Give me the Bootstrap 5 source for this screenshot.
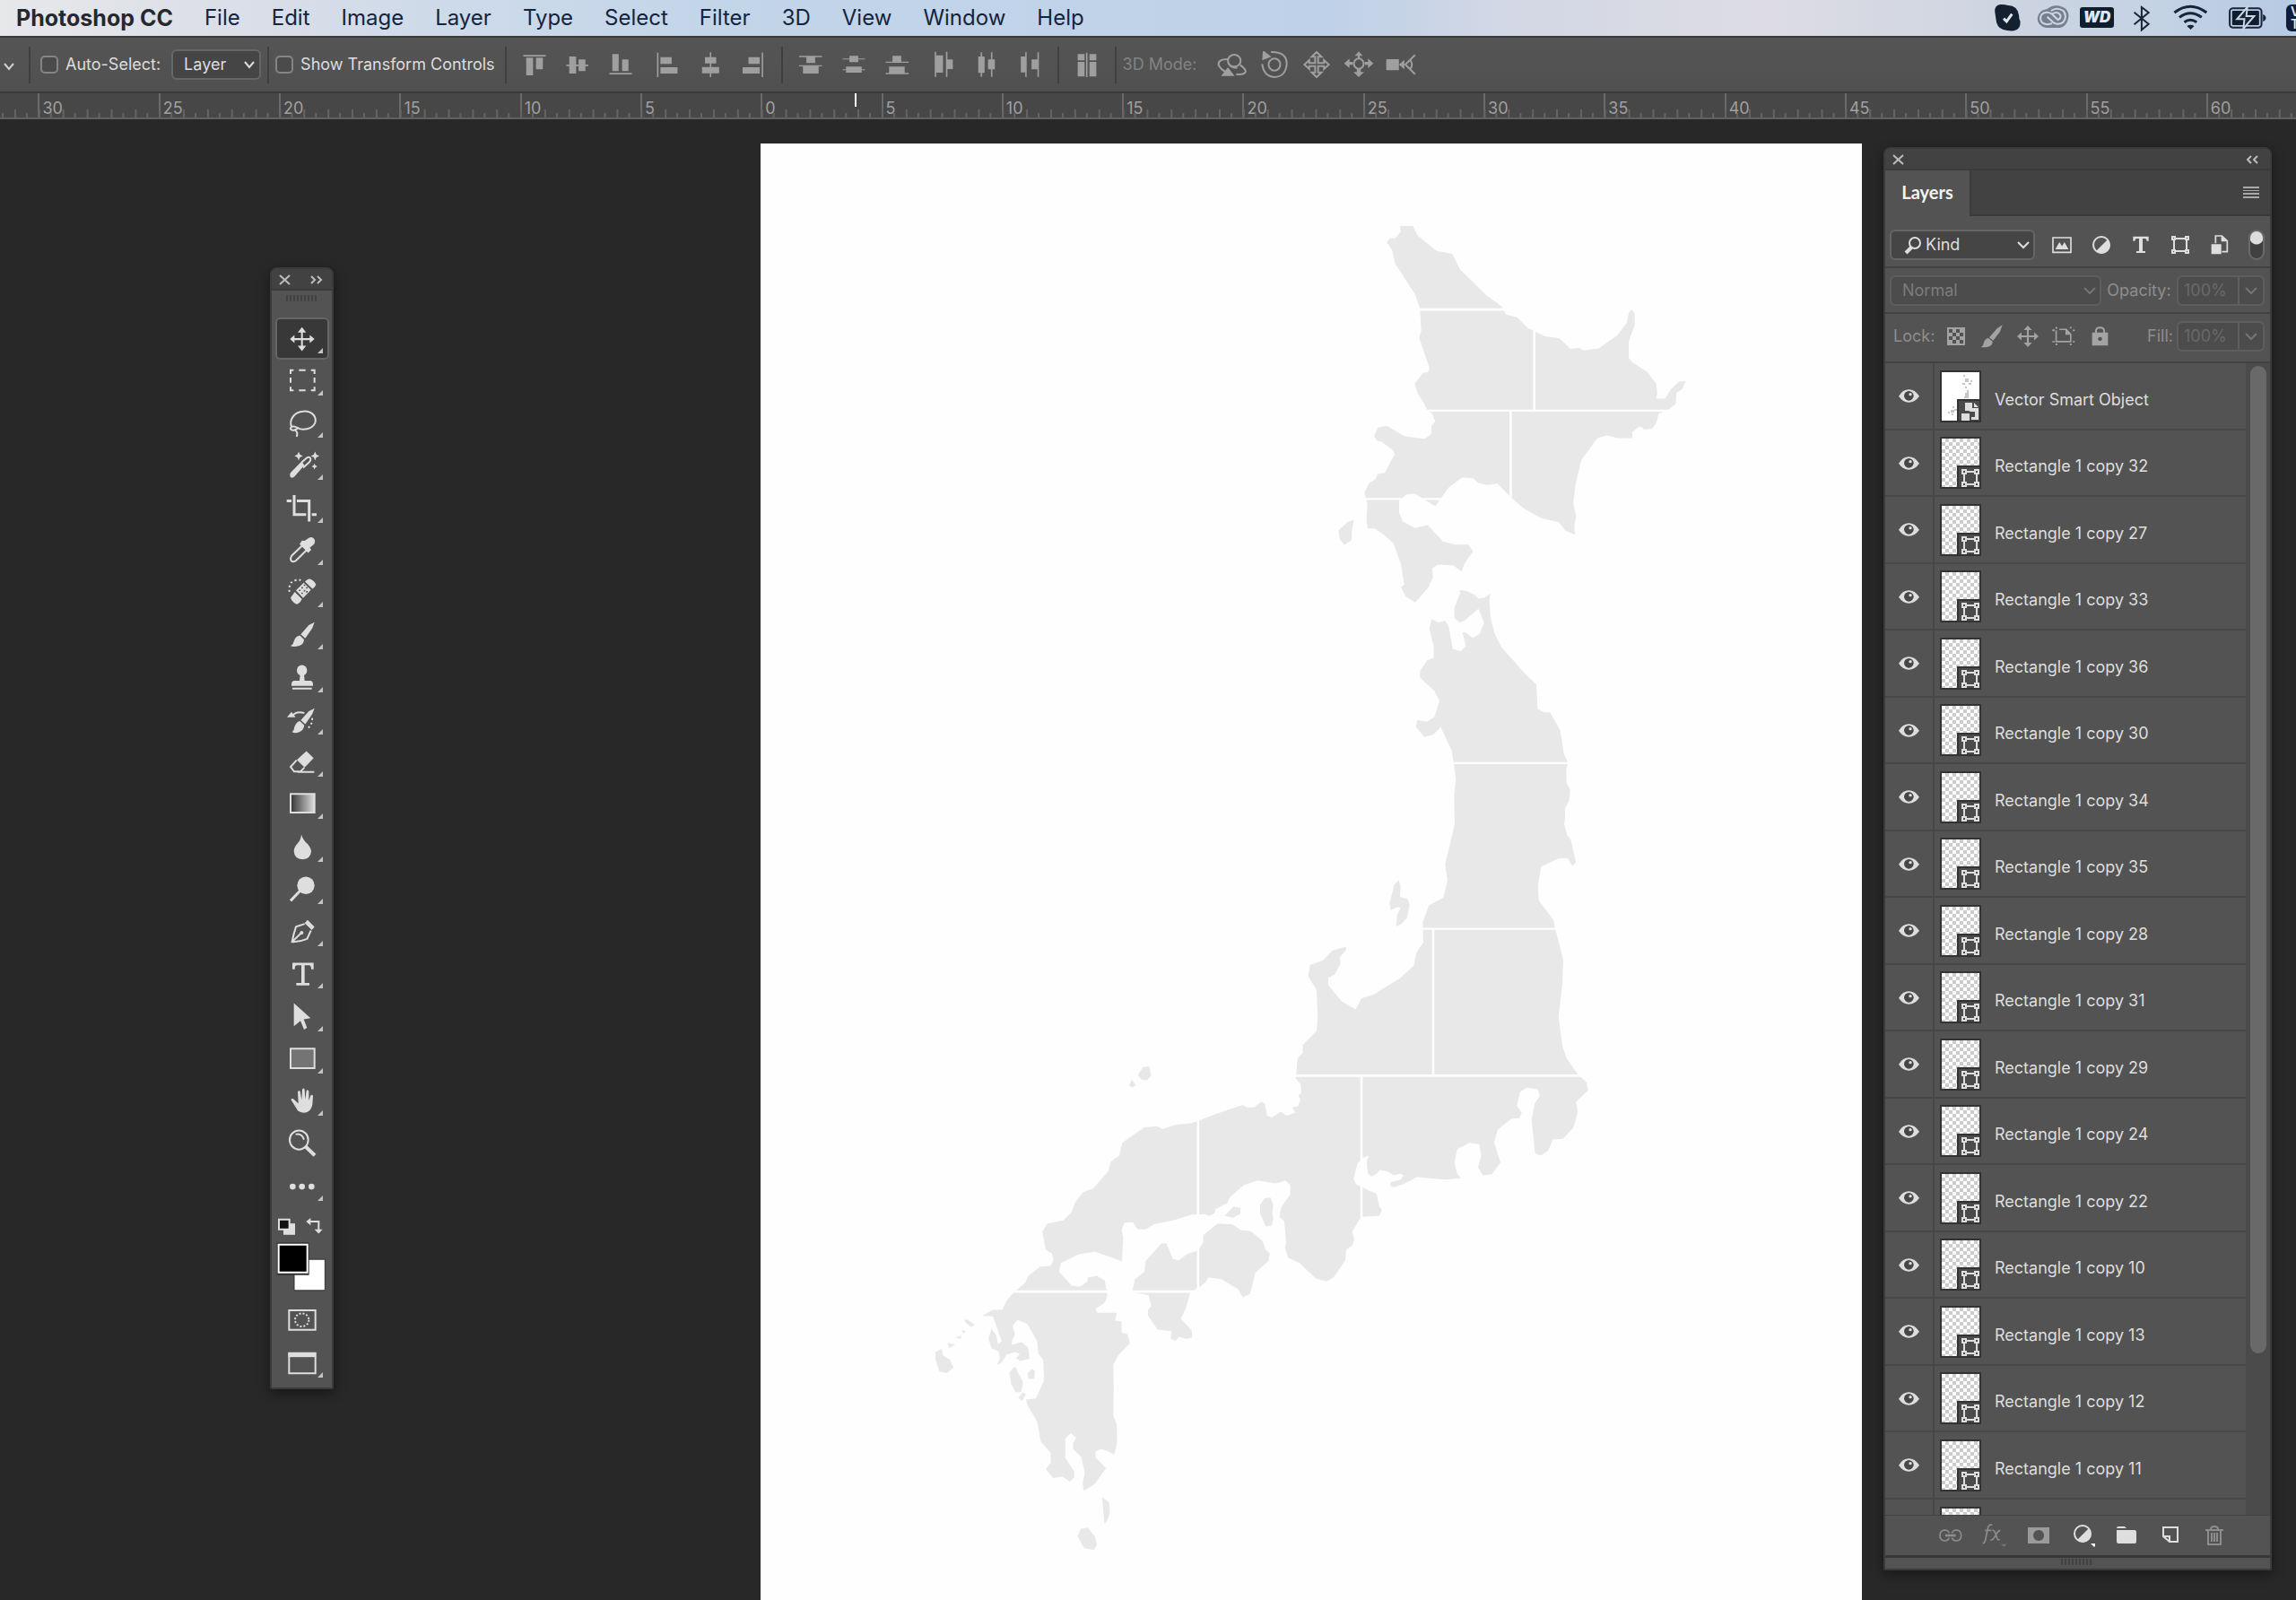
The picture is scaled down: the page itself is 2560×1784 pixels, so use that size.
<!DOCTYPE html>
<html lang="en">
<head>
<meta charset="utf-8">
<meta name="viewport" content="width=device-width, initial-scale=1">
<title>Photoshop CC</title>
<link href="https://cdn.jsdelivr.net/npm/bootstrap@5.3.0/dist/css/bootstrap.min.css" rel="stylesheet">
<style>
  :root { --panel:#535353; --panel-dark:#424242; --edge:#3b3b3b; --field:#454545; --ink:#dedede; --dim:#8e8e8e; --off:#6c6c6c; }
  body { font-family: Inter, "Liberation Sans", sans-serif; font-size:18px; line-height:24px; background:#282828; color:var(--ink); }
  svg { display:block; flex:none; }
  .line path, .line rect, .line circle, .line ellipse { vector-effect:non-scaling-stroke; }
  .bare { background:none; border:0; padding:0; color:inherit; display:flex; align-items:center; justify-content:center; }

  /* system menu bar */
  .menubar { height:40px; color:#14243c; background:linear-gradient(90deg,#e7e8ea 0,#d9dde8 12%,#cddaea 20%,#c2d5e9 32%,#bfd1e8 58%,#d3d8e5 66%,#dddce4 77%,#ccd4e1 88%,#c4d2e4 94%,#b5cae3 100%); }
  .menubar a { color:inherit; text-decoration:none; font-size:24px; line-height:40px; white-space:nowrap; }
  .menu-list { gap:35px; padding-left:18px; }
  .menu-list a:first-child { color:#25292f; font-size:25px; }
  .wd-box { width:38px; height:23px; margin:8px 12px 9px 6px; border-radius:3px; background:#0f1d2f; color:#dfe6f0; font:italic 900 17px/23px Inter, sans-serif; text-align:center; }
  .vt-box { width:11px; height:30px; margin:5px 0 5px 10px; border-radius:6px 0 0 6px; background:#0f1d3a; color:#dfe6f0; font:600 14px/14px Inter, sans-serif; overflow:hidden; padding:1px 0 0 5px; }

  /* tool options */
  .options { height:64px; border-top:2px solid #3a3a3a; border-bottom:2px solid #3a3a3a; background:linear-gradient(#555,#505050); white-space:nowrap; }
  .options label { padding-right:4px; }
  .sep { flex:none; width:2px; height:41px; background:#3f3f3f; margin:0 7px; }
  .tick { appearance:none; flex:none; width:20px; height:20px; border:2px solid #858585; border-radius:5px; background:#4b4b4b; margin:0; }
  .opt { width:48px; height:60px; color:#9f9f9f; flex:none; }
  .opt.mode { width:47px; }
  .drop { position:relative; }
  .drop select, .field { appearance:none; width:100%; height:34px; border:2px solid #666; border-radius:6px; background:var(--field); color:var(--ink); font-size:18px; line-height:24px; padding:0 12px; }
  .drop svg { position:absolute; right:6px; top:11px; pointer-events:none; }
  .faded select, .field { background:#4c4c4c; border-color:#5e5e5e; color:#7c7c7c; opacity:1; }

  /* ruler */
  .ruler { position:relative; height:29px; background:#474747; border-bottom:2px solid #606060; overflow:hidden; color:#a0a0a0; padding-left:1.66%; }
  .ruler svg { position:absolute; left:0; top:0; }
  .ruler span { flex:0 0 5.335%; padding-left:3px; border-left:2px solid #6a6a6a; line-height:33px; }
  .pointer { position:absolute; left:37.23%; top:0; width:2px; height:15px; background:#fff; }

  /* workspace */
  .work { position:relative; overflow:hidden; }
  .page { width:47.95%; margin:27px 0 0 33.14%; background:#fefefe; }
  .page svg { width:100%; height:auto; }
  .window { position:absolute; border:2px solid var(--edge); background:var(--panel); border-radius:8px 8px 2px 2px; box-shadow:0 4px 14px rgba(0,0,0,.45); overflow:hidden; }
  .titlebar { height:24px; background:var(--panel-dark); border-bottom:2px solid var(--edge); color:#bdbdbd; padding-top:2px; }
  .grip { width:36px; height:7px; background:repeating-linear-gradient(90deg,#424242 0 2px,transparent 2px 4px); }

  /* tool palette */
  .palette { left:301px; top:165px; width:71px; }
  .grip-row { padding:5px 0 18px; }
  .tool { position:relative; width:60px; height:47px; border:0; padding:0; background:none; color:var(--ink); border-radius:5px; display:block; }
  .tool.on { background:#383838; box-shadow:inset 0 0 0 2px #666; }
  .more::after { content:""; position:absolute; right:7px; bottom:7px; border-left:6px solid transparent; border-bottom:6px solid #c4c4c4; }

  /* layers panel */
  .layers { right:27px; top:31px; width:433px; }
  .tabs { height:51px; background:var(--panel-dark); border-bottom:2px solid var(--edge); }
  .tabs .tab { height:51px; width:96px; background:var(--panel); border-right:2px solid var(--edge); font:700 20px/48px Lato, sans-serif; color:#f2f2f2; padding-bottom:3px; }
  .prow { border-bottom:2px solid #424242; height:51px; padding:0 6px 0 5px; color:var(--dim); }
  .prow.kind { height:58px; padding-top:7px; }
  .prow.lock { height:55px; padding-bottom:4px; }
  .kind .bare { width:44px; height:34px; color:var(--ink); }
  .lock .bare { width:40px; height:34px; color:#a3a3a3; }
  .switch { appearance:none; width:18px; height:34px; border-radius:9px; border:2px solid #6a6a6a; background:radial-gradient(circle at 7px 7px,#dedede 7px,#404040 8px); margin:0; flex:none; }
  .num { width:98px; flex:none; }
  .num .field { width:70px; border-radius:6px 0 0 6px; padding:0 6px; color:#696969; }
  .num .bare { width:28px; height:34px; border:2px solid #5e5e5e; border-left:0; border-radius:0 6px 6px 0; background:#4c4c4c; color:#757575; }
  .list { height:1284px; overflow:hidden; }
  .layer { height:74px; border-bottom:2px solid #474747; }
  .layer:nth-child(odd) { height:75px; }
  .eye { width:55px; height:100%; border-right:2px solid #474747; flex:none; color:var(--ink); }
  .eye.bare { border-right:2px solid #474747; }
  .thumb { margin:0 15px 0 6px; }
  .lname { padding-top:8px; white-space:nowrap; }
  .track { width:27px; background:#4b4b4b; padding:3px 4px 0 5px; flex:none; }
  .knob { height:1101px; border-radius:9px; background:#696969; }
  .foot { height:45px; padding-left:48px; border-top:1px solid #424242; }
  .foot .bare { width:49px; height:43px; }
  .endgrip { height:15px; border-top:3px solid #383838; }
  .endgrip .grip { margin:1px 0 0 196px; }
</style>
<script src="https://cdn.jsdelivr.net/npm/bootstrap@5.3.0/dist/js/bootstrap.bundle.min.js"></script>
</head>
<body class="vh-100 d-flex flex-column overflow-hidden">

<header class="menubar d-flex justify-content-between flex-shrink-0">
  <nav class="menu-list d-flex">
    <a href="#" class="fw-bold">Photoshop CC</a><a href="#">File</a><a href="#">Edit</a><a href="#">Image</a><a href="#">Layer</a><a href="#">Type</a><a href="#">Select</a><a href="#">Filter</a><a href="#">3D</a><a href="#">View</a><a href="#">Window</a><a href="#">Help</a>
  </nav>
  <div class="d-flex">
    <svg class="line" width="47" height="40" viewBox="940 0 86 120" preserveAspectRatio="none"><path fill="#141f2f" d="M966 15Q955 17 955 38Q956 48 957 60Q958 92 972 99Q982 104 994 103Q1008 98 1007 72Q1004 62 1004 50Q1001 18 982 18Q974 14 966 15Z"/><path d="M973 62L979 72L990 47" fill="none" stroke="#dde5ef" stroke-width="3"/></svg>
    <svg class="line" width="50" height="40" viewBox="1026 0 92 120" preserveAspectRatio="none" fill="none" stroke="#76818f"><path fill="#76818f" stroke="none" d="M1062 30Q1070 18 1083 19Q1106 24 1106 55Q1104 88 1088 93H1060Q1042 88 1042 61Q1044 34 1062 30Z"/><path stroke="#ced6e2" stroke-width="2" d="M1071 46Q1060 36 1051 48Q1045 63 1052 76Q1062 86 1072 78M1070 36Q1082 22 1095 36Q1104 54 1095 74Q1086 85 1076 77L1062 56M1072 47Q1083 36 1089 50Q1091 62 1084 66L1071 46"/></svg>
    <span class="wd-box">WD</span>
    <svg class="line" width="40" height="40" viewBox="1221 0 72 120" preserveAspectRatio="none"><path fill="none" stroke="#17243a" stroke-width="2" d="M1240 41L1269 80L1255 100V24L1269 42L1240 82"/></svg>
    <svg class="line" width="64" height="40" viewBox="1293 0 116 120" preserveAspectRatio="none"><path fill="none" stroke="#17243a" stroke-width="3" d="M1321 42Q1353 1 1386 42M1331 58Q1353 30 1376 58M1341 74Q1353 60 1366 74"/><path fill="#17243a" d="M1346 87Q1354 80 1361 87L1354 99Z"/></svg>
    <svg class="line" width="66" height="40" viewBox="1409 0 121 120" preserveAspectRatio="none"><rect x="1433" y="28" width="65" height="64" rx="7" ry="10" fill="none" stroke="#17243a" stroke-width="2"/><rect x="1438" y="36" width="55" height="48" rx="2" fill="#0f1d2f"/><path fill="#17243a" d="M1501 48Q1507 52 1507 60T1501 72Z"/><path fill="#17243a" stroke="#cad7e7" stroke-width="2" d="M1469 24L1448 64H1463L1461 96L1483 54H1467Z"/></svg>
    <span class="vt-box">V<br>T</span>
  </div>
</header>

<section class="options d-flex align-items-center flex-shrink-0" aria-label="Tool options">
  <svg class="line" width="25" height="60" viewBox="0 0 25 60"><path d="M5 29l5 6 5-6" fill="none" stroke="#d0d0d0" stroke-width="2"/></svg>
  <i class="sep"></i>
  <input class="tick ms-1 me-2" type="checkbox" id="auto"><label for="auto">Auto-Select:</label>
  <div class="drop ms-2" style="width:100px"><select aria-label="Auto-select target"><option>Layer</option></select><svg class="line" width="14" height="12" viewBox="0 0 14 12"><path d="M2 3l5 6 5-6" fill="none" stroke="#dedede" stroke-width="2"/></svg></div>
  <i class="sep"></i>
  <input class="tick me-2" type="checkbox" id="xform"><label for="xform">Show Transform Controls</label>
  <i class="sep"></i>
  <button class="bare opt" aria-label="Align top"><svg width="36" height="30" viewBox="1053 170 66 90" preserveAspectRatio="none" fill="currentColor"><path d="M1063 183h46v5h-46zM1069 192h14v59h-14zM1089 192h14v39h-14z"/></svg></button>
  <button class="bare opt" aria-label="Align middle"><svg width="36" height="30" viewBox="1140 170 66 90" preserveAspectRatio="none" fill="currentColor"><path d="M1156 188h14v57h-14zM1175 198h14v39h-14zM1150 215h45v5h-45z"/></svg></button>
  <button class="bare opt" aria-label="Align bottom"><svg width="36" height="30" viewBox="1226 170 66 90" preserveAspectRatio="none" fill="currentColor"><path d="M1242 180h13v57h-13zM1262 198h13v39h-13zM1236 243h46v5h-46z"/></svg></button>
  <button class="bare opt ms-1" aria-label="Align left"><svg width="36" height="30" viewBox="1324 170 66 90" preserveAspectRatio="none" fill="currentColor"><path d="M1336 175h3v82h-3zM1343 190h23v23h-23zM1343 224h35v21h-35z"/></svg></button>
  <button class="bare opt" aria-label="Align centre"><svg width="36" height="30" viewBox="1410 170 66 90" preserveAspectRatio="none" fill="currentColor"><path d="M1442 174h3v83h-3zM1432 190h23v21h-23zM1426 223h35v21h-35z"/></svg></button>
  <button class="bare opt" aria-label="Align right"><svg width="36" height="30" viewBox="1497 170 66 90" preserveAspectRatio="none" fill="currentColor"><path d="M1547 175h3v82h-3zM1520 190h23v23h-23zM1508 224h35v21h-35z"/></svg></button>
  <i class="sep"></i>
  <button class="bare opt" aria-label="Distribute top"><svg width="36" height="30" viewBox="82 170 66 90" preserveAspectRatio="none" fill="currentColor"><path d="M91 186h47v4h-47zM91 217h47v4h-47zM106 188h18v22h-18zM99 219h32v26h-32z"/></svg></button>
  <button class="bare opt" aria-label="Distribute middle"><svg width="36" height="30" viewBox="168 170 66 90" preserveAspectRatio="none" fill="currentColor"><path d="M178 195h46v3h-46zM178 231h46v3h-46zM192 186h18v21h-18zM185 222h32v20h-32z"/></svg></button>
  <button class="bare opt" aria-label="Distribute bottom"><svg width="36" height="30" viewBox="254 170 66 90" preserveAspectRatio="none" fill="currentColor"><path d="M264 205h47v4h-47zM264 243h47v4h-47zM278 186h18v21h-18zM271 222h32v22h-32z"/></svg></button>
  <button class="bare opt ms-1" aria-label="Distribute left"><svg width="36" height="30" viewBox="353 170 66 90" preserveAspectRatio="none" fill="currentColor"><path d="M368 172h3v84h-3zM391 172h3v84h-3zM371 184h14v58h-14zM393 198h12v32h-12z"/></svg></button>
  <button class="bare opt" aria-label="Distribute centre"><svg width="36" height="30" viewBox="440 170 66 90" preserveAspectRatio="none" fill="currentColor"><path d="M461 174h3v82h-3zM482 174h3v82h-3zM456 188h13v55h-13zM476 198h14v33h-14z"/></svg></button>
  <button class="bare opt" aria-label="Distribute right"><svg width="36" height="30" viewBox="526 170 66 90" preserveAspectRatio="none" fill="currentColor"><path d="M550 174h3v82h-3zM575 174h3v82h-3zM541 188h10v53h-10zM563 198h12v33h-12z"/></svg></button>
  <i class="sep"></i>
  <button class="bare opt" aria-label="Auto-align"><svg width="36" height="30" viewBox="642 170 66 90" preserveAspectRatio="none" fill="currentColor"><path d="M656 180h14v21h-14zM680 180h14v21h-14zM656 206h14v49h-14zM680 206h14v49h-14zM673 175h3v82h-3z"/></svg></button>
  <i class="sep"></i>
  <span class="me-3" style="color:#838383">3D Mode:</span>
  <button class="bare opt mode" aria-label="Orbit"><svg class="line" width="36" height="30" viewBox="941 170 66 90" preserveAspectRatio="none" fill="none" stroke="currentColor" stroke-width="2"><ellipse cx="978" cy="202" rx="13" ry="20"/><path d="M965 197Q944 197 946 216Q950 232 962 240M966 208Q968 226 984 226M990 216Q1003 232 1001 240Q997 250 982 247"/><path d="M955 250L965 229L975 250Z" fill="currentColor"/></svg></button>
  <button class="bare opt mode" aria-label="Roll"><svg class="line" width="36" height="30" viewBox="1027 170 66 90" preserveAspectRatio="none" fill="none" stroke="currentColor" stroke-width="2"><ellipse cx="1060" cy="215" rx="12" ry="20"/><path d="M1053 173Q1086 172 1085 215Q1082 256 1060 257Q1038 254 1035 213"/><path d="M1038 173L1050 188L1037 196Z" fill="currentColor"/></svg></button>
  <button class="bare opt mode" aria-label="Pan"><svg class="line" width="36" height="30" viewBox="1113 170 66 90" preserveAspectRatio="none" fill="none" stroke="currentColor" stroke-width="2"><path d="M1146 173L1156 189H1149V210H1161V200L1171 215L1161 230V220H1149V241H1156L1146 257L1136 241H1143V220H1131V230L1121 215L1131 200V210H1143V189H1136Z"/></svg></button>
  <button class="bare opt mode" aria-label="Slide"><svg class="line" width="36" height="30" viewBox="1199 170 66 90" preserveAspectRatio="none" fill="currentColor"><path d="M1232 171L1240 186H1234V194H1230V186H1224ZM1232 257L1221 240H1228V230H1236V240H1243ZM1202 211L1213 195V206H1220V216H1213V227ZM1262 211L1251 195V206H1244V216H1251V227Z"/><ellipse cx="1232" cy="212" rx="10" ry="17" fill="none" stroke="currentColor" stroke-width="2"/></svg></button>
  <button class="bare opt mode" aria-label="Zoom camera"><svg class="line" width="36" height="30" viewBox="1286 170 66 90" preserveAspectRatio="none" fill="currentColor"><rect x="1289" y="197" width="26" height="37" rx="2"/><path d="M1315 215L1326 199V231Z"/><path d="M1348 183L1328 215L1348 247M1338 200Q1345 215 1338 230" fill="none" stroke="currentColor" stroke-width="2"/></svg></button>
</section>

<div class="ruler d-flex flex-shrink-0" aria-label="Ruler">
  <svg width="100%" height="27"><defs><pattern id="ticks" patternUnits="userSpaceOnUse" x="16" y="0" width="26.86" height="27"><path d="M0 18h2v9h-2zM13 22h2v5h-2z" fill="#646464"/></pattern></defs><rect width="100%" height="27" fill="url(#ticks)"/></svg>
  <span>30</span><span>25</span><span>20</span><span>15</span><span>10</span><span>5</span><span>0</span><span>5</span><span>10</span><span>15</span><span>20</span><span>25</span><span>30</span><span>35</span><span>40</span><span>45</span><span>50</span><span>55</span><span>60</span>
  <i class="pointer"></i>
</div>

<main class="work flex-grow-1">
  <div class="page">
    <svg viewBox="849 160 1227 1624" role="img" aria-label="Map of Japan">
      <g fill="#e8e8e8">
        <g transform="translate(1440 230) scale(.33333)">
          <path d="M365,66 408,66 415,80 424,97 487,149 540,159 566,211 655,298 705,334 720,362 757,371 792,407 850,435 897,441 935,477 964,473 979,482 1029,475 1091,432 1123,390 1130,356 1137,348 1143,348 1150,360 1150,396 1130,452 1130,507 1142,522 1191,553 1222,594 1225,624 1222,643 1251,643 1272,610 1298,586 1321,584 1309,611 1290,623 1287,661 1263,680 1230,693 1223,722 1209,743 1182,746 1167,735 1141,755 1143,775 1094,775 1056,766 1024,776 971,849 952,930 944,993 954,1035 948,1070 950,1098 917,1084 897,1057 836,1042 778,1010 735,972 691,927 656,932 626,924 610,909 572,907 528,940 483,1003 440,976 415,961 387,963 362,984 362,1023 374,1053 415,1076 458,1066 509,1121 548,1131 594,1131 609,1154 581,1194 570,1221 543,1200 491,1198 473,1211 475,1241 461,1273 416,1325 384,1305 368,1273 379,1265 368,1195 343,1127 313,1100 280,1077 257,1077 253,1050 256,995 246,958 261,926 283,913 290,895 315,891 334,852 347,832 343,816 303,787 289,784 278,770 291,740 321,734 379,768 447,777 469,762 471,732 483,719 472,693 456,683 447,661 424,625 414,592 443,557 460,554 463,539 429,440 436,415 432,342 416,295 349,192 338,145 321,120 331,107 349,107 368,84Z"/>
          <path d="M211,1048 204,1085 203,1116 180,1132 163,1113 160,1083 191,1055Z"/>
          <path fill="#fefefe" d="M420 341h300v8h-300zM810 400h8v283h-8zM440 680h840v7h-840zM731 683h8v300h-8zM240 975h135v7h-135zM430 975h80v7h-80z"/>
        </g>
        <g transform="translate(1400 630) scale(.33333 .39541)">
          <path d="M685,70 705,72 734,83 746,94 766,92 787,80 784,97 788,150 803,196 824,231 907,309 941,336 945,405 967,415 987,415 1021,466 1033,532 1047,556 1041,577 1042,615 1054,631 1050,665 1037,685 1037,710 1034,730 1044,761 1056,773 1073,837 1062,848 1046,826 1016,826 957,850 946,903 949,945 998,1000 1005,1027 1031,1114 1028,1180 1015,1272 1028,1355 1042,1390 1083,1439 137,1439 143,1389 160,1375 160,1352 206,1313 210,1275 206,1197 178,1159 184,1127 229,1113 259,1086 304,1076 306,1083 283,1106 286,1123 266,1154 245,1163 245,1184 291,1230 337,1252 356,1221 395,1211 487,1163 531,1128 540,1093 563,1063 561,1006 582,959 630,937 644,888 636,843 668,730 666,650 672,604 664,556 658,523 621,456 596,478 566,484 538,455 543,436 575,441 600,428 617,382 600,355 552,317 552,297 576,268 598,261 597,225 583,179 591,152 613,162 635,156 648,172 661,235 688,243 705,229 694,189 705,190 728,205 752,193 766,162 747,123 703,155 685,162 667,149 667,120 686,80Z"/>
          <path d="M481,888 487,909 485,935 511,941 517,959 508,994 488,1012 472,1018 475,988 486,967 478,963 454,973 450,954 466,900Z"/>
          <path fill="#fefefe" d="M655 555h400v6h-400zM555 1022h460v6h-460zM592 1025h8v414h-8z"/>
        </g>
        <g transform="translate(1100 1180) scale(.44643 .33333)">
          <path d="M774,57 1483,57 1500,80 1504,106 1473,145 1478,177 1467,231 1441,268 1416,270 1404,307 1386,324 1371,316 1363,204 1370,152 1383,124 1378,102 1350,97 1334,111 1326,158 1338,180 1332,199 1312,201 1278,237 1269,280 1285,347 1263,387 1241,390 1229,363 1237,324 1232,286 1208,281 1177,302 1170,346 1177,385 1187,399 1149,404 1076,396 1043,419 1018,430 1009,424 1012,413 1036,404 1043,390 1036,385 1018,389 1003,377 984,372 976,385 963,394 954,384 951,344 956,325 942,331 928,351 918,401 925,421 976,452 982,492 989,507 982,526 937,529 915,578 920,604 915,625 900,638 897,676 868,732 851,745 824,735 783,683 754,665 747,630 750,613 745,542 733,529 738,496 760,454 760,422 748,408 723,417 679,407 645,422 610,462 603,482 574,503 571,517 557,526 547,520 514,521 468,541 422,553 399,571 379,570 367,547 347,548 339,570 343,597 340,677 309,662 272,645 232,655 187,684 183,712 214,759 235,763 254,745 254,732 277,726 297,741 302,779 72,779 98,750 106,727 136,695 162,693 169,672 165,651 150,640 141,578 154,551 194,541 214,513 223,481 243,446 268,434 306,376 312,345 333,324 341,281 396,230 428,226 441,236 475,221 514,216 577,184 642,155 652,163 670,163 688,144 697,150 702,190 714,197 736,177 752,191 773,180 765,163 779,160 786,136 780,124 788,114 786,86 774,66Z"/>
          <path d="M393,28 408,26 413,57 402,72 389,71 380,54ZM364,69 375,88 367,96 358,91ZM695,467 711,464 718,489 715,515 718,536 714,558 699,560 685,519 685,489ZM619,495 636,499 636,519 617,532 596,525Z"/>
          <path d="M579,551 616,554 638,574 661,576 691,609 698,637 709,652 706,676 673,716 660,787 641,798 630,771 588,737 556,731 547,751 515,779 510,783 500,833 487,869 514,908 515,932 500,937 483,930 473,943 461,936 464,911 429,906 405,859 405,840 413,828 407,792 366,779 372,738 396,713 399,677 438,618 451,617 467,669 481,675 503,653 530,641 543,614 543,590Z"/>
          <path fill="#fefefe" d="M765 53h730v8h-730zM935 57h6v475h-6zM527 195h6v335h-6zM527 635h6v140h-6zM360 775h160v8h-160z"/>
        </g>
        <g transform="translate(1020 1370) scale(.33333)">
          <path d="M335,210 644,210 647,222 637,247 606,267 614,280 678,280 673,305 694,309 694,346 714,351 722,381 685,420 666,453 668,520 667,625 678,654 679,716 669,755 650,743 624,735 607,744 607,764 642,799 605,852 568,875 564,849 571,816 560,763 532,735 532,715 543,698 524,682 506,701 506,765 536,811 536,829 522,844 496,828 465,832 441,802 457,781 457,748 424,710 412,643 382,594 374,570 408,566 435,505 432,436 416,417 412,375 379,317 346,304 330,323 338,353 328,371 327,386 360,378 382,396 386,433 356,441 341,432 354,417 338,411 309,420 294,445 276,455 287,434 284,409 260,399 249,366 259,333 275,355 281,385 293,374 264,292 229,290 262,270 295,269 309,240Z"/>
          <path d="M168,303 180,303 204,320 191,327 172,312ZM160,338 173,340 166,348ZM137,361 160,357 155,367ZM113,380 139,386 117,398ZM72,410 93,400 97,423 120,436 132,463 110,481 85,476 72,436ZM332,463 341,461 346,477 365,511 358,545 340,545 325,517 319,480ZM393,467 405,474 402,500 383,501 380,482ZM364,546 375,551 362,574 349,564ZM629,896 652,914 655,947 647,973 637,985ZM557,1002 580,998 605,1028 612,1055 601,1073 569,1067 547,1027Z"/>
          <path fill="#fefefe" d="M325 205h330v8h-330z"/>
        </g>
      </g>
    </svg>
  </div>

  <aside class="window palette" aria-label="Tools">
    <div class="titlebar d-flex align-items-center justify-content-between px-2">
      <svg class="line" width="13" height="12" viewBox="0 0 13 12"><path d="M1 1l11 10M12 1L1 11" stroke="currentColor" stroke-width="2"/></svg>
      <svg class="line" width="16" height="10" viewBox="0 0 16 10"><path d="M1 1l4 4-4 4M8 1l4 4-4 4" fill="none" stroke="currentColor" stroke-width="2"/></svg>
    </div>
    <div class="grip-row d-flex justify-content-center"><div class="grip"></div></div>
    <div class="d-flex flex-column align-items-center" style="gap:1px">
      <div>
        <button class="tool on more" aria-label="Move"><svg class="line" width="60" height="47" viewBox="50 155 180 115" preserveAspectRatio="none" fill="currentColor"><path d="M139 181L153 196H142V211H165V203L181 214L165 225V217H142V232H153L139 247L125 232H136V217H114V225L99 214L114 203V211H136V196H125Z"/></svg></button>
        <button class="tool more" aria-label="Marquee"><svg class="line" width="60" height="47" viewBox="50 271 180 115" preserveAspectRatio="none" fill="none" stroke="currentColor" stroke-width="2"><path d="M111 300H101V310M129 300H151M169 300H181V310M181 320V334M181 345V355H169M151 355H129M111 355H101V345M101 334V320"/></svg></button>
        <button class="tool more" aria-label="Lasso"><svg class="line" width="60" height="47" viewBox="50 387 180 115" preserveAspectRatio="none" fill="none" stroke="currentColor" stroke-width="2"><path d="M105 456C94 438 112 414 144 413C176 412 190 430 182 446C172 462 142 466 124 458C112 452 100 454 101 461C106 468 122 464 127 456M116 464Q127 470 121 482"/></svg></button>
        <button class="tool more" aria-label="Magic wand"><svg class="line" width="60" height="47" viewBox="50 502 180 115" preserveAspectRatio="none" fill="currentColor"><path d="M101 580L138 550L147 560L115 590Q106 597 100 592Q96 586 101 580Z"/><path d="M138 552L155 540Q164 535 168 542Q169 548 163 552L143 567" fill="none" stroke="currentColor" stroke-width="2"/><path d="M128 523l4 8 10 4-10 4-4 8-4-8-10-4 10-4zM183 523l4 8 10 4-10 4-4 8-4-8-10-4 10-4zM181 555l3 6 7 2-7 3-3 6-3-6-7-3 7-2z"/></svg></button>
      </div>
      <div>
        <button class="tool more" aria-label="Crop"><svg class="line" width="60" height="47" viewBox="50 618 180 115" preserveAspectRatio="none" fill="none" stroke="currentColor" stroke-width="3"><path d="M88 656H104M113 640V693H153M122 656H163V712M172 693H188"/></svg></button>
        <button class="tool more" aria-label="Eyedropper"><svg class="line" width="60" height="47" viewBox="50 734 180 115" preserveAspectRatio="none" fill="currentColor"><path d="M139 765L148 766L162 758Q174 753 181 762Q185 770 177 777L165 785L170 790L160 799L131 775Z"/><path d="M141 778L105 806Q98 815 104 821Q112 825 120 819L155 791" fill="none" stroke="currentColor" stroke-width="2"/></svg></button>
        <button class="tool more" aria-label="Healing brush"><svg class="line" width="60" height="47" viewBox="50 850 180 115" preserveAspectRatio="none" fill="currentColor"><path d="M149 878Q158 870 166 871Q182 876 186 887Q182 894 174 898ZM145 881L169 901L143 923L119 902ZM115 906L139 926Q130 940 121 940Q106 934 101 922Z"/><path fill="#535353" d="M145 886h5v4h-5zM153 893h5v4h-5zM137 893h5v4h-5zM145 901h5v4h-5zM129 900h5v4h-5zM137 908h5v4h-5zM153 904h5v4h-5z"/><path d="M97 906Q94 880 115 875T140 880" fill="none" stroke="currentColor" stroke-width="2" stroke-dasharray="2 3"/></svg></button>
        <button class="tool more" aria-label="Brush"><svg class="line" width="60" height="47" viewBox="50 966 180 115" preserveAspectRatio="none" fill="currentColor"><path d="M181 990L173 1007L150 1034L135 1023L162 998ZM132 1026L146 1037Q145 1051 128 1055Q112 1058 101 1055Q111 1050 113 1040Q118 1028 132 1026Z"/></svg></button>
      </div>
      <div>
        <button class="tool more" aria-label="Clone stamp"><svg class="line" width="60" height="47" viewBox="50 1081 180 115" preserveAspectRatio="none" fill="currentColor"><ellipse cx="139" cy="1119" rx="17" ry="15"/><path d="M133 1130H146L148 1147H168Q177 1148 176 1161H104Q103 1148 112 1147H131ZM107 1166h65v5h-65z"/></svg></button>
        <button class="tool more" aria-label="History brush"><svg class="line" width="60" height="47" viewBox="50 1197 180 115" preserveAspectRatio="none" fill="currentColor"><path d="M181 1223L173 1240L150 1267L135 1256L162 1231ZM132 1258L147 1270Q145 1284 128 1289Q115 1293 106 1288Q113 1284 114 1274Q119 1261 132 1258ZM89 1248L104 1233L118 1248Z"/><path d="M108 1243Q120 1230 147 1236" fill="none" stroke="currentColor" stroke-width="2"/><path d="M173 1250Q175 1270 154 1280" fill="none" stroke="currentColor" stroke-width="2" stroke-dasharray="2 3"/></svg></button>
        <button class="tool more" aria-label="Eraser"><svg class="line" width="60" height="47" viewBox="50 1313 180 115" preserveAspectRatio="none" fill="currentColor"><path d="M154 1341L178 1360L148 1386L122 1365Z"/><path d="M121 1366L101 1384L113 1397H134L147 1386M124 1398H180" fill="none" stroke="currentColor" stroke-width="2"/></svg></button>
        <button class="tool more" aria-label="Gradient"><svg class="line" width="60" height="47" viewBox="50 1429 180 115" preserveAspectRatio="none"><defs><linearGradient id="ramp"><stop offset="0" stop-color="#333"/><stop offset="1" stop-color="#ddd"/></linearGradient></defs><rect x="101" y="1459" width="80" height="51" fill="url(#ramp)" stroke="currentColor" stroke-width="2"/></svg></button>
      </div>
      <div>
        <button class="tool more" aria-label="Blur"><svg class="line" width="60" height="47" viewBox="50 1 180 115" preserveAspectRatio="none" fill="currentColor"><path d="M137 24Q143 40 158 50Q170 62 170 70Q168 91 141 92Q114 91 112 70Q112 60 124 49Q136 38 137 24Z"/></svg></button>
        <button class="tool more" aria-label="Dodge"><svg class="line" width="60" height="47" viewBox="50 117 180 115" preserveAspectRatio="none" fill="currentColor"><ellipse cx="152" cy="164" rx="29" ry="24"/><path d="M137 175L101 206" stroke="currentColor" stroke-width="3"/></svg></button>
        <button class="tool more" aria-label="Pen"><svg class="line" width="60" height="47" viewBox="50 233 180 115" preserveAspectRatio="none" fill="currentColor"><path d="M158 259L181 278L172 287L148 268Z"/><path d="M148 270L119 278Q110 300 106 319Q130 320 156 311L169 288M106 319L137 295" fill="none" stroke="currentColor" stroke-width="2"/><ellipse cx="138" cy="294" rx="6" ry="5"/></svg></button>
        <button class="tool more" aria-label="Type"><svg class="line" width="60" height="47" viewBox="50 348 180 115" preserveAspectRatio="none" fill="currentColor"><path d="M107 376H178V394H170Q170 384 164 383H148V431H164V438H120V431H137V383H121Q115 384 115 394H107Z"/></svg></button>
      </div>
      <div>
        <button class="tool more" aria-label="Path selection"><svg class="line" width="60" height="47" viewBox="50 464 180 115" preserveAspectRatio="none" fill="currentColor"><path d="M112 485L168 526L145 529L156 552L146 557L134 533L112 548Z"/></svg></button>
        <button class="tool more" aria-label="Rectangle"><svg class="line" width="60" height="47" viewBox="50 580 180 115" preserveAspectRatio="none"><rect x="101" y="610" width="80" height="53" fill="#747474" stroke="currentColor" stroke-width="2"/></svg></button>
        <button class="tool more" aria-label="Hand"><svg class="line" width="60" height="47" viewBox="50 696 180 115" preserveAspectRatio="none" fill="currentColor"><path d="M102 750Q106 745 113 750L127 761L125 729Q129 722 133 728L138 751L140 722Q144 717 148 722L150 750L154 726Q158 720 162 727L162 753L168 739Q173 734 176 740L174 763Q170 784 146 786Q126 786 119 772Z"/></svg></button>
        <button class="tool" aria-label="Zoom"><svg class="line" width="60" height="47" viewBox="50 812 180 115" preserveAspectRatio="none" fill="none" stroke="currentColor" stroke-width="2"><ellipse cx="129" cy="861" rx="31" ry="26"/><path d="M118 846Q138 842 146 860"/><path d="M152 880L182 903" stroke-width="4"/></svg></button>
      </div>
      <button class="tool more" aria-label="Edit toolbar"><svg class="line" width="60" height="47" viewBox="50 927 180 115" preserveAspectRatio="none" fill="currentColor"><ellipse cx="108" cy="986" rx="10" ry="8"/><ellipse cx="139" cy="986" rx="10" ry="8"/><ellipse cx="171" cy="986" rx="10" ry="8"/></svg></button>
      <svg class="line" width="60" height="100" viewBox="50 1043 180 245" preserveAspectRatio="none"><path fill="#dedede" d="M77 1085h39v31h-39z"/><path fill="#111" stroke="#dedede" stroke-width="2" d="M62 1074h35v27h-35z"/><path fill="none" stroke="#dedede" stroke-width="2" d="M165 1080H195V1104"/><path fill="#dedede" d="M153 1080l15-10v20zM181 1101h27l-13 12z"/><path fill="#fff" stroke="#333" stroke-width="1" d="M113 1183h103v85h-103z"/><path fill="#333" d="M55 1137h108v89h-108z"/><path fill="#000" stroke="#fff" stroke-width="2" d="M61 1143h96v76h-96z"/></svg>
      <button class="tool" aria-label="Quick mask"><svg class="line" width="60" height="47" viewBox="50 1292 180 115" preserveAspectRatio="none" fill="none" stroke="currentColor" stroke-width="2"><rect x="96" y="1324" width="88" height="53"/><ellipse cx="139" cy="1350" rx="23" ry="18" stroke-dasharray="2 2"/></svg></button>
      <button class="tool more mb-1" aria-label="Screen mode"><svg class="line" width="60" height="47" viewBox="50 1408 180 115" preserveAspectRatio="none" fill="none" stroke="currentColor" stroke-width="2"><path d="M96 1439h88v55h-88z"/><path d="M93 1438h93v12h-93z" fill="currentColor" stroke="none"/></svg></button>
    </div>
  </aside>

  <aside class="window layers" aria-label="Layers panel">
    <div class="titlebar d-flex align-items-center justify-content-between px-2">
      <svg class="line" width="13" height="12" viewBox="0 0 13 12"><path d="M1 1l11 10M12 1L1 11" stroke="currentColor" stroke-width="2"/></svg>
      <svg class="line me-1" width="14" height="10" viewBox="0 0 14 10"><path d="M5 1L1 5l4 4M12 1L8 5l4 4" fill="none" stroke="currentColor" stroke-width="2"/></svg>
    </div>
    <div class="tabs d-flex justify-content-between">
      <button class="bare tab">Layers</button>
      <button class="bare px-2 me-1" aria-label="Panel menu"><svg width="18" height="13" viewBox="0 0 18 13" fill="#a9a9a9"><path d="M0 0h18v2H0zM0 4h18v1H0zM0 7h18v2H0zM0 11h18v2H0z"/></svg></button>
    </div>
    <div class="prow kind d-flex align-items-center">
      <div class="drop" style="width:162px">
        <select aria-label="Filter kind" style="padding-left:38px"><option>Kind</option></select>
        <svg class="line" style="left:16px;top:8px" width="20" height="20" viewBox="0 0 20 20" fill="none" stroke="#dedede"><circle cx="12" cy="7" r="6" stroke-width="2"/><path d="M8 12l-6 6" stroke-width="4"/></svg>
        <svg class="line" width="14" height="12" viewBox="0 0 14 12"><path d="M1 3l6 6 6-6" fill="none" stroke="#dedede" stroke-width="2"/></svg>
      </div>
      <div class="d-flex ms-2 me-auto">
        <button class="bare" aria-label="Pixel layers"><svg width="22" height="20" viewBox="626 340 67 57"><path fill="none" stroke="currentColor" stroke-width="5" d="M629 344h61v50h-61z"/><path fill="currentColor" d="M637 384L651 359L660 373L668 359L682 384Z"/></svg></button>
        <button class="bare" aria-label="Adjustment layers"><svg width="22" height="22" viewBox="0 0 22 22"><circle cx="11" cy="11" r="9" fill="none" stroke="currentColor" stroke-width="2"/><path d="M18 5A9 9 0 0 1 5 18Z" fill="currentColor"/></svg></button>
        <button class="bare" aria-label="Type layers"><svg width="18" height="20" viewBox="893 340 54 58"><path fill="currentColor" d="M894 341H946V356H940Q939 349 935 348H926V390H935V396H905V390H914V348H905Q901 349 900 356H894Z"/></svg></button>
        <button class="bare" aria-label="Shape layers"><svg width="22" height="22" viewBox="0 0 22 22" fill="none" stroke="currentColor" stroke-width="2"><path d="M6 4h10M6 18h10M4 6v10M18 6v10"/><path d="M2 2h3v3H2zM17 2h3v3h-3zM2 17h3v3H2zM17 17h3v3h-3z"/></svg></button>
        <button class="bare" aria-label="Smart objects"><svg width="20" height="22" viewBox="1157 338 60 66"><path fill="none" stroke="currentColor" stroke-width="5" d="M1173 366V341H1194L1212 358V394H1194"/><path fill="currentColor" d="M1159 369h33v33h-33zM1192 341l20 19h-20z"/></svg></button>
      </div>
      <input class="switch" type="checkbox" aria-label="Layer filtering">
    </div>
    <div class="prow d-flex align-items-center justify-content-between">
      <div class="drop faded" style="width:236px"><select aria-label="Blend mode" disabled><option>Normal</option></select><svg class="line" width="14" height="12" viewBox="0 0 14 12"><path d="M1 3l6 6 6-6" fill="none" stroke="#757575" stroke-width="2"/></svg></div>
      <label for="opacity">Opacity:</label>
      <div class="num d-flex"><input class="field" id="opacity" value="100%" disabled><button class="bare" aria-label="Opacity slider"><svg class="line" width="14" height="10" viewBox="0 0 14 10"><path d="M1 2l6 6 6-6" fill="none" stroke="currentColor" stroke-width="2"/></svg></button></div>
    </div>
    <div class="prow lock d-flex align-items-center">
      <span class="ms-1">Lock:</span>
      <button class="bare ms-1" aria-label="Lock transparency"><svg width="20" height="20" viewBox="0 0 20 20" fill="currentColor"><path fill-rule="evenodd" d="M0 0h20v20H0zM2 2v4h4V2zM10 2v4h4V2zM6 6v4h4V6zM14 6v4h4V6zM2 10v4h4v-4zM10 10v4h4v-4zM6 14v4h4v-4zM14 14v4h4v-4z"/></svg></button>
      <button class="bare" aria-label="Lock pixels"><svg width="24" height="26" viewBox="388 637 72 78" fill="currentColor"><path d="M459 638L451 660L428 690L415 680L441 650ZM412 682L426 693Q426 708 410 711Q398 714 388 712Q396 706 397 696Q401 684 412 682Z"/></svg></button>
      <button class="bare" aria-label="Lock position"><svg width="24" height="24" viewBox="503 640 68 68" fill="currentColor"><path d="M537 640L550 654H540V671H557V661L571 674L557 687V677H540V694H550L537 708L524 694H534V677H517V687L503 674L517 661V671H534V654H524Z"/></svg></button>
      <button class="bare" aria-label="Lock artboard"><svg width="26" height="22" viewBox="620 640 80 66"><path fill="none" stroke="currentColor" stroke-width="5" d="M634 652V691H684V666L669 649H645"/><path fill="currentColor" d="M666 647L687 668H666ZM621 649h8v6h-8zM632 641h6v7h-6zM681 641h6v5h-6zM691 650h7v5h-7zM621 689h8v5h-8zM632 698h6v6h-6zM681 698h6v6h-6zM691 689h7v5h-7z"/></svg></button>
      <button class="bare" aria-label="Lock all"><svg width="19" height="22" viewBox="751 640 58 66"><path fill="none" stroke="currentColor" stroke-width="6" d="M766 663V655Q766 643 780 643T794 655V663"/><path fill="currentColor" fill-rule="evenodd" d="M753 660H807V704H753ZM780 675a7 7 0 1 0 .1 0Z"/></svg></button>
      <label class="ms-auto me-1" for="fill">Fill:</label>
      <div class="num d-flex"><input class="field" id="fill" value="100%" disabled><button class="bare" aria-label="Fill slider"><svg class="line" width="14" height="10" viewBox="0 0 14 10"><path d="M1 2l6 6 6-6" fill="none" stroke="currentColor" stroke-width="2"/></svg></button></div>
    </div>
    <div class="list d-flex">
      <div class="flex-grow-1" id="rows"></div>
      <div class="track"><div class="knob"></div></div>
    </div>
    <div class="foot d-flex">
      <button class="bare" aria-label="Link layers"><svg width="26" height="14" viewBox="246 377 78 42" fill="none" stroke="#8d8d8d"><path stroke-width="5" d="M280 390Q276 380 265 380Q249 381 249 398T265 416Q276 416 280 406M289 390Q293 380 304 380Q320 381 320 398T304 416Q293 416 289 406"/><path stroke-width="8" d="M267 398h35"/></svg></button>
      <button class="bare" aria-label="Layer style"><svg width="28" height="26" viewBox="402 364 84 78" fill="none" stroke="#8d8d8d" stroke-width="5"><path d="M436 368Q424 364 421 380L412 422Q410 430 404 429M412 386H433M436 386Q443 384 446 395L452 412Q455 421 461 416M463 386Q456 386 450 398L442 411Q437 420 430 418"/><path fill="#737373" stroke="none" d="M464 432h21l-10 9z"/></svg></button>
      <button class="bare" aria-label="Layer mask"><svg width="24" height="18" viewBox="0 0 24 18"><path fill="#9a9a9a" fill-rule="evenodd" d="M0 0h24v18H0zM12 3a6 6 0 1 0 .1 0z"/></svg></button>
      <button class="bare" aria-label="Adjustment layer"><svg width="28" height="26" viewBox="-3 0 28 26"><circle cx="11" cy="11" r="9" fill="none" stroke="#dedede" stroke-width="2"/><path d="M18 5A9 9 0 0 1 5 18Z" fill="#dedede"/><path d="M20 22h8l-4 4z" fill="#fff"/></svg></button>
      <button class="bare" aria-label="New group"><svg width="22" height="19" viewBox="0 0 22 19" fill="#dedede"><path d="M0 2q0-2 2-2h7l2 2zM0 4h20q2 0 2 2v11q0 2-2 2H2q-2 0-2-2z"/></svg></button>
      <button class="bare" aria-label="New layer"><svg width="20" height="19" viewBox="0 0 20 19"><path fill="none" stroke="#dedede" stroke-width="2" d="M2 1h16v16H9L2 11zM2 11h7v6"/></svg></button>
      <button class="bare" aria-label="Delete layer"><svg width="20" height="22" viewBox="0 0 20 22" fill="none" stroke="#8d8d8d" stroke-width="2"><path d="M0 5h20M6 4q0-3 4-3t4 3M3 6v15h14V6M7 8v10M10 8v10M13 8v10"/></svg></button>
    </div>
    <div class="endgrip"><div class="grip"></div></div>
  </aside>
</main>

<svg width="0" height="0" class="position-absolute">
  <defs>
    <pattern id="checker" width="8" height="8" patternUnits="userSpaceOnUse" x="2" y="2"><path fill="#fff" d="M0 0h8v8H0z"/><path fill="#ccc" d="M4 0h4v4H4zM0 4h4v4H0z"/></pattern>
    <symbol id="eye" viewBox="114 102 69 45"><path fill="#dedede" d="M114 125Q128 103 148 103T183 125Q168 146 148 146T114 125Z"/><circle cx="148" cy="124" r="16" fill="#474747"/><circle cx="153" cy="119" r="5" fill="#dedede"/></symbol>
    <symbol id="shape-thumb" viewBox="0 0 46 58"><path fill="#333" d="M0 0h46v58H0z"/><path fill="url(#checker)" d="M2 2h42v54H2z"/><path fill="#333" d="M19 32h25v24H19z"/><path fill="#4b4b4b" d="M21 34h23v22H21z"/><g fill="none" stroke="#dedede"><path stroke-width="2" d="M29 39h10M29 53h10M27 41v10M41 41v10"/><path stroke-width="2" d="M25 37h4v4h-4zM39 37h4v4h-4zM25 51h4v4h-4zM39 51h4v4h-4z"/></g></symbol>
    <symbol id="smart-thumb" viewBox="0 0 46 58"><path fill="#333" d="M0 0h46v58H0z"/><path fill="#fff" d="M2 2h42v54H2z"/><path fill="#c6c6c6" d="M26 5h2v2h-2zM28 9h4v4h-4zM34 11h2v2h-2zM25 14h3v2h-3zM32 14h3v2h-3zM28 18h2v2h-2zM30 22h2v3h-2zM28 25h4v4h-4zM27 29h5v2h-5zM14 40h2v2h-2zM12 44h4v3h-4zM16 43h3v2h-3zM9 46h2v2H9zM13 48h2v2h-2z"/><path fill="#333" d="M19 32h25v24H19z"/><path fill="#4b4b4b" d="M21 34h23v22H21z"/><path fill="#dedede" d="M28 36h8v6h7v13h-8v-3h4v-6h-5l-2-1h-4zM38 36l5 5h-5zM24 48h9v8h-9z"/></symbol>
  </defs>
</svg>

<script>
  const names = ["Vector Smart Object"].concat([32,27,33,36,30,34,35,28,31,29,24,22,10,13,12,11,9].map(n => "Rectangle 1 copy " + n));
  document.getElementById("rows").innerHTML = names.map((name, i) => i === names.length - 1
    ? `<div class="layer d-flex"><div class="eye"></div><svg class="thumb mt-2" width="46" height="58"><use href="#shape-thumb"/></svg></div>`
    : `<div class="layer d-flex align-items-center">
        <button class="bare eye" aria-label="Toggle visibility"><svg width="23" height="15"><use href="#eye"/></svg></button>
        <svg class="thumb" width="46" height="58"><use href="#${i ? "shape" : "smart"}-thumb"/></svg>
        <span class="lname">${name}</span>
      </div>`).join("");
</script>
</body>
</html>
